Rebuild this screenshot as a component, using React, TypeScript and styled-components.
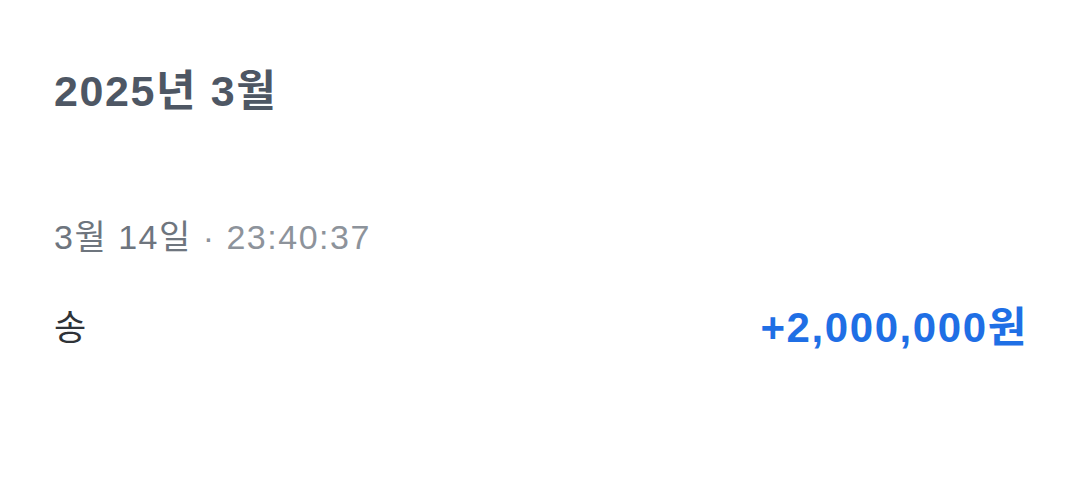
import * as React from "react";
import styled, { createGlobalStyle } from "styled-components";

const GlobalStyle = createGlobalStyle`
  html, body {
    margin: 0;
    padding: 0;
    background: #fff;
  }
  body {
    font-family: "Liberation Sans", "Noto Sans CJK KR", sans-serif;
    -webkit-font-smoothing: antialiased;
  }
`;

const Page = styled.div`
  width: 1078px;
  height: 498px;
  box-sizing: border-box;
  padding: 65px 52px 0 54px;
  background: #fff;
  overflow: hidden;
`;

const MonthTitle = styled.h2`
  margin: 0;
  font-size: 43px;
  line-height: 52px;
  font-weight: 700;
  color: #4e5764;
  letter-spacing: 1.6px;
`;

const DateLine = styled.div`
  margin-top: 98px;
  font-size: 34px;
  line-height: 44px;
  color: #6e757e;
  letter-spacing: 1.5px;
`;

const Time = styled.span`
  color: #8d939b;
`;

const TxRow = styled.div`
  margin-top: 46px;
  display: flex;
  justify-content: space-between;
  align-items: flex-start;
`;

const Name = styled.div`
  font-size: 35px;
  line-height: 46px;
  color: #2f3338;
`;

const AmountCol = styled.div`
  display: flex;
  flex-direction: column;
  align-items: flex-end;
`;

const Amount = styled.div<{ $positive?: boolean }>`
  font-size: 42px;
  line-height: 46px;
  font-weight: 700;
  color: ${(p) => (p.$positive ? "#1f6fe5" : "#2f3338")};
  letter-spacing: 1.6px;
  margin-right: -2px;
`;

const Sub = styled.div`
  margin-top: 12px;
  height: 40px;
  width: 280px;
`;

export default function App() {
  return (
    <>
      <GlobalStyle />
      <Page>
        <MonthTitle>2025년 3월</MonthTitle>
        <DateLine>
          3월 14일 <Time>· 23:40:37</Time>
        </DateLine>
        <TxRow>
          <Name>송</Name>
          <AmountCol>
            <Amount $positive>+2,000,000원</Amount>
            <Sub />
          </AmountCol>
        </TxRow>
      </Page>
    </>
  );
}
